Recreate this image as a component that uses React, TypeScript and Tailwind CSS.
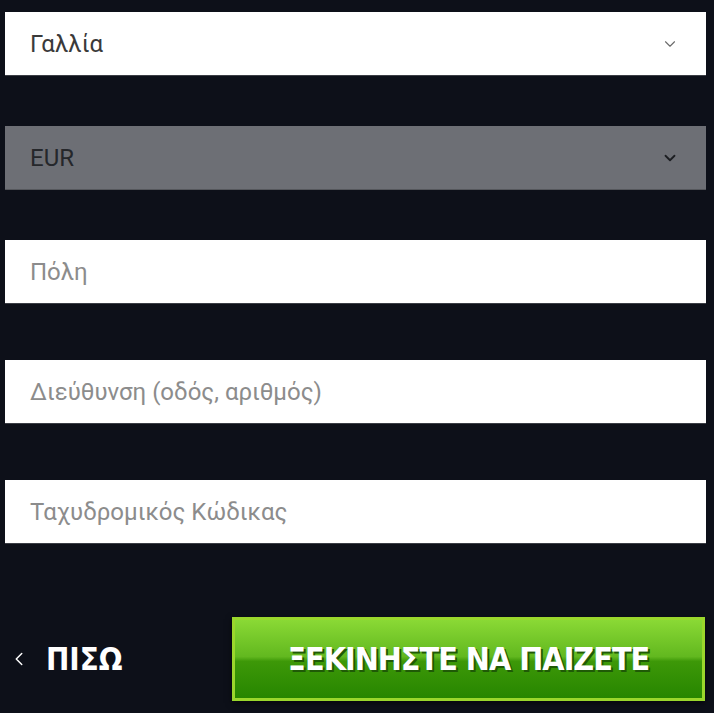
import { ChevronDown, ChevronLeft } from "lucide-react";

const SelectField = ({ value, disabled }: { value: string; disabled?: boolean }) => {
  return (
    <div
      className={
        disabled
          ? "h-[64px] flex items-center justify-between pl-[25px] pr-[27px] bg-[#6d6f75] border-b border-[#55575c]"
          : "h-[64px] flex items-center justify-between pl-[25px] pr-[27px] bg-white border-b border-[#3b3e45]"
      }
    >
      <span className={disabled ? "text-[24px] text-[#25272b]" : "text-[24px] text-[#3a3a3a]"}>{value}</span>
      <ChevronDown
        className={disabled ? "size-[18px] text-[#1c1e22]" : "size-[18px] text-[#6b6b6b]"}
        strokeWidth={disabled ? 2.4 : 1.5}
      />
    </div>
  );
};

const TextField = ({ placeholder }: { placeholder: string }) => {
  return (
    <div className="h-[64px] flex items-center pl-[25px] bg-white border-b border-[#3b3e45]">
      <span className="text-[24px] text-[#8c8c8c]">{placeholder}</span>
    </div>
  );
};

export default function App() {
  return (
    <div
      className="w-[714px] h-[713px] bg-[#0d1019] overflow-hidden"
      style={{ fontFamily: "Roboto, 'Noto Sans', sans-serif" }}
    >
      <div className="flex flex-col w-[701px] ml-[5px] pt-[12px]">
        <SelectField value="Γαλλία" />
        <div className="mt-[50px]">
          <SelectField value="EUR" disabled />
        </div>
        <div className="mt-[50px]">
          <TextField placeholder="Πόλη" />
        </div>
        <div className="mt-[56px]">
          <TextField placeholder="Διεύθυνση (οδός, αριθμός)" />
        </div>
        <div className="mt-[56px]">
          <TextField placeholder="Ταχυδρομικός Κώδικας" />
        </div>
        <div className="mt-[73px] flex items-center justify-between">
          <div className="flex items-center gap-[16px] pl-[3px] text-white">
            <ChevronLeft className="size-[22px]" strokeWidth={1.6} />
            <span
              className="text-[31px] font-bold leading-none"
              style={{ fontFamily: "'DejaVu Sans Condensed', sans-serif" }}
            >
              ΠΙΣΩ
            </span>
          </div>
          <button className="w-[473px] h-[84px] mr-[1px] border-[3px] border-[#9ad72c] bg-[linear-gradient(to_bottom,#8ad935_0%,#62b81f_47%,#3d9808_53%,#278600_100%)] shadow-[0_2px_6px_rgba(0,0,0,0.6)] flex items-center justify-center">
            <span
              className="text-white text-[32px] font-bold leading-none tracking-[-1px] [text-shadow:2px_2px_0_#1f5a06]"
              style={{ fontFamily: "'DejaVu Sans Condensed', sans-serif" }}
            >
              ΞΕΚΙΝΗΣΤΕ ΝΑ ΠΑΙΖΕΤΕ
            </span>
          </button>
        </div>
      </div>
    </div>
  );
}
